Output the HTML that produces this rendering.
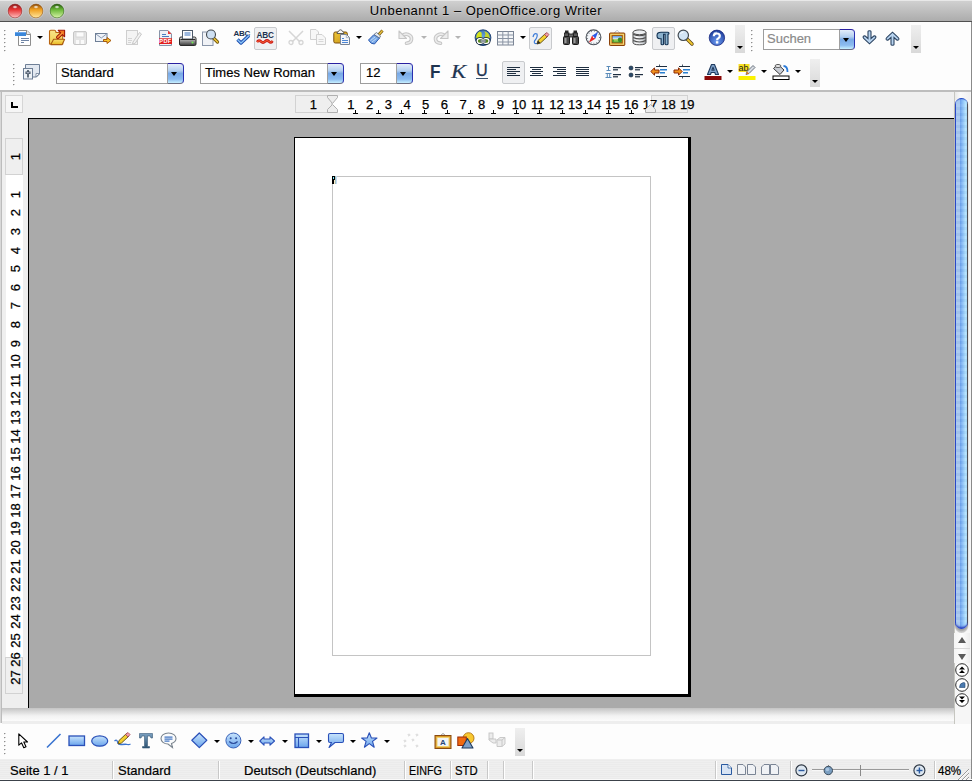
<!DOCTYPE html>
<html><head><meta charset="utf-8"><style>
*{margin:0;padding:0;box-sizing:border-box}
html,body{width:972px;height:781px;overflow:hidden;background:#fdfdfd;font-family:"Liberation Sans",sans-serif;position:relative}
.a{position:absolute}
#title{left:0;top:0;width:972px;height:22px;background:linear-gradient(#e8e8e8 0,#e8e8e8 1px,#d0d0d0 1px,#acacac 100%);border-bottom:1px solid #505050}
#title .t{left:0;width:972px;top:3px;text-align:center;font-size:13px;letter-spacing:0.5px;color:#000;text-shadow:0 1px 0 rgba(255,255,255,.25)}
.tl{width:14px;height:14px;border-radius:50%;top:4px}
.grip{width:2px;background:repeating-linear-gradient(#a8a8a8 0 1px,transparent 1px 4px)}
.btnbox{border:1px solid #c9c9c9;background:#eeeeee;border-radius:2px}
.chev{background:linear-gradient(#f4f4f4,#d8d8d8);}
.chev:after{content:"";position:absolute;left:2px;bottom:5px;border-left:3px solid transparent;border-right:3px solid transparent;border-top:3px solid #000}
.dd{position:absolute;width:0;height:0;border-left:3px solid transparent;border-right:3px solid transparent;border-top:3px solid #000}
.ddg{position:absolute;width:0;height:0;border-left:3px solid transparent;border-right:3px solid transparent;border-top:3px solid #b8b8b8}
.combo{position:absolute;background:#fff;border:1px solid #9a9a9a;font-size:13px;color:#000;padding-left:4px;line-height:19px}
.cbtn{position:absolute;background:linear-gradient(#cfe0f5,#8fb6e8 50%,#6d9fe0 51%,#a9cdf5);border:1px solid #3e5ea8;border-radius:0 4px 4px 0}
.cbtn:after{content:"";position:absolute;left:4px;top:8px;border-left:4px solid transparent;border-right:4px solid transparent;border-top:5px solid #000}
.rn{position:absolute;font-size:13px;color:#000;-webkit-text-stroke:0.25px #000;width:30px;text-align:center;line-height:13px}
.vr{position:absolute;font-size:13px;color:#000;-webkit-text-stroke:0.25px #000;width:30px;text-align:center;line-height:13px;transform:rotate(-90deg)}
.tick{position:absolute;width:5px;height:4px}
.tick:before{content:"";position:absolute;left:2px;top:0;width:1px;height:3px;background:#000}
.tick:after{content:"";position:absolute;left:0;top:3px;width:5px;height:1px;background:#000}
.st{position:absolute;top:763px;font-size:13px;color:#000;-webkit-text-stroke:0.2px #000;line-height:15px;white-space:nowrap}
.sd{position:absolute;top:761px;width:1px;height:18px;background:#c8c8c8;box-shadow:1px 0 0 #fff}
svg{position:absolute;overflow:visible}
</style></head><body>
<div id="title" class="a">
<div class="a t">Unbenannt 1 – OpenOffice.org Writer</div>
<svg style="left:7px;top:3px" width="16" height="16" viewBox="0 0 16 16"><defs>
<linearGradient id="rl" x1="0" y1="0" x2="0" y2="1"><stop offset="0" stop-color="#8a1c1c"/><stop offset="0.4" stop-color="#e83434"/><stop offset="1" stop-color="#ffc0c0"/></linearGradient>
<radialGradient id="rlh" cx="0.5" cy="0.5" r="0.5"><stop offset="0" stop-color="#fff" stop-opacity="1"/><stop offset="1" stop-color="#fff" stop-opacity="0"/></radialGradient></defs>
<circle cx="8" cy="8" r="7.6" fill="none" stroke="#dfe2e2" stroke-width="0.8" opacity="0.7"/>
<circle cx="8" cy="8" r="6.9" fill="url(#rl)" stroke="#8a1c1c" stroke-width="0.7" stroke-opacity="0.8"/>
<ellipse cx="8" cy="4" rx="2.8" ry="1.8" fill="url(#rlh)"/></svg>
<svg style="left:28px;top:3px" width="16" height="16" viewBox="0 0 16 16"><defs>
<linearGradient id="ol" x1="0" y1="0" x2="0" y2="1"><stop offset="0" stop-color="#8a4a0a"/><stop offset="0.4" stop-color="#f0a020"/><stop offset="1" stop-color="#ffe8a0"/></linearGradient>
<radialGradient id="olh" cx="0.5" cy="0.5" r="0.5"><stop offset="0" stop-color="#fff" stop-opacity="1"/><stop offset="1" stop-color="#fff" stop-opacity="0"/></radialGradient></defs>
<circle cx="8" cy="8" r="7.6" fill="none" stroke="#dfe2e2" stroke-width="0.8" opacity="0.7"/>
<circle cx="8" cy="8" r="6.9" fill="url(#ol)" stroke="#8a4a0a" stroke-width="0.7" stroke-opacity="0.8"/>
<ellipse cx="8" cy="4" rx="2.8" ry="1.8" fill="url(#olh)"/></svg>
<svg style="left:49px;top:3px" width="16" height="16" viewBox="0 0 16 16"><defs>
<linearGradient id="gl2" x1="0" y1="0" x2="0" y2="1"><stop offset="0" stop-color="#2a5a10"/><stop offset="0.4" stop-color="#6ab838"/><stop offset="1" stop-color="#d8f4a8"/></linearGradient>
<radialGradient id="gl2h" cx="0.5" cy="0.5" r="0.5"><stop offset="0" stop-color="#fff" stop-opacity="1"/><stop offset="1" stop-color="#fff" stop-opacity="0"/></radialGradient></defs>
<circle cx="8" cy="8" r="7.6" fill="none" stroke="#dfe2e2" stroke-width="0.8" opacity="0.7"/>
<circle cx="8" cy="8" r="6.9" fill="url(#gl2)" stroke="#2a5a10" stroke-width="0.7" stroke-opacity="0.8"/>
<ellipse cx="8" cy="4" rx="2.8" ry="1.8" fill="url(#gl2h)"/></svg>
</div>
<div class="a" style="left:0;top:22px;width:972px;height:68px;background:#fdfdfd"></div>
<div class="a" style="left:0;top:90px;width:972px;height:2px;background:#bdbdbd"></div>
<div class="a" style="left:0;top:92px;width:954px;height:616px;background:#efefef"></div>
<div class="a" style="left:0;top:92px;width:2px;height:631px;background:linear-gradient(90deg,#d8d8d8 0 1px,#bcbcbc 1px 2px)"></div>
<div class="a" style="left:5px;top:95px;width:18px;height:18px;background:#f6f6f6;border:1px solid #d6d6d6"></div>
<div class="a" style="left:11px;top:102px;width:2px;height:6px;background:#000"></div>
<div class="a" style="left:11px;top:106px;width:7px;height:2px;background:#000"></div>
<div class="a" style="left:295px;top:96px;width:393px;height:17px;background:#fff"></div>
<div class="a" style="left:295px;top:95px;width:37px;height:18px;background:#efefef;border:1px solid #d2d2d2"></div>
<div class="a" style="left:651px;top:95px;width:37px;height:18px;background:#efefef;border:1px solid #d2d2d2"></div>
<div class="rn" style="left:335.9px;top:98px">1</div>
<div class="rn" style="left:354.6px;top:98px">2</div>
<div class="rn" style="left:373.3px;top:98px">3</div>
<div class="rn" style="left:392.0px;top:98px">4</div>
<div class="rn" style="left:410.6px;top:98px">5</div>
<div class="rn" style="left:429.3px;top:98px">6</div>
<div class="rn" style="left:448.0px;top:98px">7</div>
<div class="rn" style="left:466.7px;top:98px">8</div>
<div class="rn" style="left:485.4px;top:98px">9</div>
<div class="rn" style="left:504.1px;top:98px">10</div>
<div class="rn" style="left:522.8px;top:98px">11</div>
<div class="rn" style="left:541.5px;top:98px">12</div>
<div class="rn" style="left:560.2px;top:98px">13</div>
<div class="rn" style="left:578.9px;top:98px">14</div>
<div class="rn" style="left:597.5px;top:98px">15</div>
<div class="rn" style="left:616.2px;top:98px">16</div>
<div class="rn" style="left:634.9px;top:98px">17</div>
<div class="rn" style="left:653.6px;top:98px">18</div>
<div class="rn" style="left:672.3px;top:98px">19</div>
<div class="rn" style="left:298.3px;top:98px">1</div>
<div class="tick" style="left:353.1px;top:110px"></div>
<div class="tick" style="left:376.1px;top:110px"></div>
<div class="tick" style="left:399.1px;top:110px"></div>
<div class="tick" style="left:422.1px;top:110px"></div>
<div class="tick" style="left:445.1px;top:110px"></div>
<div class="tick" style="left:468.1px;top:110px"></div>
<div class="tick" style="left:491.1px;top:110px"></div>
<div class="tick" style="left:514.1px;top:110px"></div>
<div class="tick" style="left:537.1px;top:110px"></div>
<div class="tick" style="left:560.1px;top:110px"></div>
<div class="tick" style="left:583.1px;top:110px"></div>
<div class="tick" style="left:606.1px;top:110px"></div>
<div class="tick" style="left:629.1px;top:110px"></div>
<svg style="left:327px;top:95px" width="11" height="18"><path d="M0.5 0.5H10.5V2.5L5.5 8.5L0.5 2.5Z M0.5 17.5H10.5V14.5L5.5 9.5L0.5 14.5Z" fill="#ededed" stroke="#b0b0b0"/></svg>
<svg style="left:645px;top:95px" width="11" height="18"><path d="M0.5 17.5H10.5V14.5L5.5 9.5L0.5 14.5Z" fill="#ededed" stroke="#b0b0b0"/></svg>
<div class="a" style="left:6px;top:138px;width:17px;height:556px;background:#fff"></div>
<div class="a" style="left:5px;top:138px;width:18px;height:37px;background:#efefef;border:1px solid #d2d2d2"></div>
<div class="a" style="left:5px;top:657px;width:18px;height:37px;background:#efefef;border:1px solid #d2d2d2"></div>
<div class="vr" style="left:-0.5px;top:187.8px">1</div>
<div class="vr" style="left:-0.5px;top:206.4px">2</div>
<div class="vr" style="left:-0.5px;top:225.0px">3</div>
<div class="vr" style="left:-0.5px;top:243.6px">4</div>
<div class="vr" style="left:-0.5px;top:262.2px">5</div>
<div class="vr" style="left:-0.5px;top:280.8px">6</div>
<div class="vr" style="left:-0.5px;top:299.3px">7</div>
<div class="vr" style="left:-0.5px;top:317.9px">8</div>
<div class="vr" style="left:-0.5px;top:336.5px">9</div>
<div class="vr" style="left:-0.5px;top:355.1px">10</div>
<div class="vr" style="left:-0.5px;top:373.7px">11</div>
<div class="vr" style="left:-0.5px;top:392.3px">12</div>
<div class="vr" style="left:-0.5px;top:410.9px">13</div>
<div class="vr" style="left:-0.5px;top:429.5px">14</div>
<div class="vr" style="left:-0.5px;top:448.1px">15</div>
<div class="vr" style="left:-0.5px;top:466.7px">16</div>
<div class="vr" style="left:-0.5px;top:485.2px">17</div>
<div class="vr" style="left:-0.5px;top:503.8px">18</div>
<div class="vr" style="left:-0.5px;top:522.4px">19</div>
<div class="vr" style="left:-0.5px;top:541.0px">20</div>
<div class="vr" style="left:-0.5px;top:559.6px">21</div>
<div class="vr" style="left:-0.5px;top:578.2px">22</div>
<div class="vr" style="left:-0.5px;top:596.8px">23</div>
<div class="vr" style="left:-0.5px;top:615.4px">24</div>
<div class="vr" style="left:-0.5px;top:634.0px">25</div>
<div class="vr" style="left:-0.5px;top:652.5px">26</div>
<div class="vr" style="left:-0.5px;top:671.1px">27</div>
<div class="vr" style="left:-0.5px;top:149.5px">1</div>
<div class="a" style="left:28px;top:118px;width:926px;height:590px;background:#aaaaaa;border-left:1px solid #000;border-top:1px solid #000"></div>
<div class="a" style="left:294px;top:137px;width:397px;height:560px;background:#fff;border-left:1px solid #000;border-top:1px solid #000;border-right:3px solid #000;border-bottom:3px solid #000"></div>
<div class="a" style="left:332px;top:176px;width:319px;height:480px;border:1px solid #c4c4c4"></div>
<div class="a" style="left:332px;top:176px;width:5px;height:8px;background:linear-gradient(90deg,#000 0 3px,#a8c4c0 3px 4px,#c4dcf4 4px)"></div>
<div class="a" style="left:333px;top:177px;width:1px;height:2px;background:#7ae8f8"></div>
<div class="a" style="left:334px;top:180px;width:1px;height:4px;background:#fcecc8"></div>
<div class="a" style="left:2px;top:708px;width:952px;height:13px;background:linear-gradient(#c4c4c4,#f2f2f2 60%,#fbfbfb)"></div>
<div class="a" style="left:2px;top:721px;width:970px;height:3px;background:#eeeeee"></div>
<div class="a" style="left:954px;top:92px;width:17px;height:632px;background:#f6f6f6"></div>
<div class="a" style="left:971px;top:22px;width:1px;height:759px;background:#8a8a8a"></div>
<div class="a" style="left:0;top:724px;width:971px;height:35px;background:#fdfdfd"></div>
<div class="a" style="left:0;top:759px;width:971px;height:21px;background:repeating-linear-gradient(#efefef 0 1px,#ebebeb 1px 2px)"></div>
<div class="a" style="left:0;top:779px;width:972px;height:1px;background:#fafafa"></div>
<div class="a" style="left:0;top:780px;width:972px;height:1px;background:#3c424a"></div>
<div class="sd" style="left:112px"></div>
<div class="sd" style="left:218px"></div>
<div class="sd" style="left:404px"></div>
<div class="sd" style="left:450px"></div>
<div class="sd" style="left:487px"></div>
<div class="sd" style="left:503px"></div>
<div class="sd" style="left:532px"></div>
<div class="sd" style="left:715px"></div>
<div class="sd" style="left:790px"></div>
<div class="sd" style="left:934px"></div>
<div class="st" style="left:10px">Seite 1 / 1</div>
<div class="st" style="left:118px">Standard</div>
<div class="st" style="left:244px">Deutsch (Deutschland)</div>
<div class="st" style="left:409px;transform:scaleX(0.83);transform-origin:0 0">EINFG</div>
<div class="st" style="left:455px;transform:scaleX(0.87);transform-origin:0 0">STD</div>
<div class="st" style="left:938px;transform:scaleX(0.89);transform-origin:0 0">48%</div>
<div class="a" style="left:4px;top:30px;width:1px;height:1px;background:#8e8e8e;box-shadow:1px 0 0 #d0d0d0,0 1px 0 #e8e8e8"></div><div class="a" style="left:4px;top:34px;width:1px;height:1px;background:#8e8e8e;box-shadow:1px 0 0 #d0d0d0,0 1px 0 #e8e8e8"></div><div class="a" style="left:4px;top:38px;width:1px;height:1px;background:#8e8e8e;box-shadow:1px 0 0 #d0d0d0,0 1px 0 #e8e8e8"></div><div class="a" style="left:4px;top:42px;width:1px;height:1px;background:#8e8e8e;box-shadow:1px 0 0 #d0d0d0,0 1px 0 #e8e8e8"></div><div class="a" style="left:4px;top:46px;width:1px;height:1px;background:#8e8e8e;box-shadow:1px 0 0 #d0d0d0,0 1px 0 #e8e8e8"></div><div class="a" style="left:4px;top:50px;width:1px;height:1px;background:#8e8e8e;box-shadow:1px 0 0 #d0d0d0,0 1px 0 #e8e8e8"></div>
<svg style="left:14px;top:30px" width="18" height="16" viewBox="0 0 18 16">
<path d="M4.5 0.5H13L16.5 4V15.5H4.5Z" fill="#fff" stroke="#8e8e8e"/>
<path d="M12.5 0.5V4.5H16.5" fill="#ececec" stroke="#8e8e8e"/>
<rect x="1" y="2" width="11" height="4" fill="#3b87d9"/><rect x="1" y="2" width="11" height="1" fill="#6aa8ee"/>
<rect x="7" y="8" width="8" height="1" fill="#6f84a4"/><rect x="7" y="10" width="8" height="1" fill="#6f84a4"/><rect x="7" y="12" width="3" height="1" fill="#6f84a4"/></svg>
<div class="a" style="left:37px;top:36px;width:0;height:0;border-left:3px solid transparent;border-right:3px solid transparent;border-top:3px solid #000"></div>
<svg style="left:48px;top:29px" width="18" height="17" viewBox="0 0 18 17">
<defs><linearGradient id="fo" x1="0" y1="0" x2="0" y2="1"><stop offset="0" stop-color="#f8e488"/><stop offset="1" stop-color="#f0d050"/></linearGradient>
<linearGradient id="ff" x1="0" y1="0" x2="0" y2="1"><stop offset="0" stop-color="#fae070"/><stop offset="1" stop-color="#e8b820"/></linearGradient></defs>
<path d="M1.5 15V2.5Q1.5 1.3 2.7 1.3H6.5Q7.5 1.3 7.8 2.5L8 3.5H13.5Q14.7 3.5 14.7 4.7V15Z" fill="url(#fo)" stroke="#b86410" stroke-width="1.1"/>
<path d="M2.8 15.6L5.6 10.3H16.6L14.2 15.6Z" fill="url(#ff)" stroke="#a85a10" stroke-width="1.1" stroke-linejoin="round"/>
<path d="M9.8 8.3L14 4.2" stroke="#a01808" stroke-width="3.6" stroke-linecap="round"/>
<path d="M10.2 1.3H16.6V7.8Z" fill="#f07820" stroke="#a01808" stroke-width="1.1" stroke-linejoin="round"/>
<path d="M9.8 8.3L14 4.2" stroke="#f89838" stroke-width="1.6" stroke-linecap="round"/></svg>
<svg style="left:73px;top:31px" width="14" height="14" viewBox="0 0 14 14">
<rect x="0.5" y="0.5" width="13" height="13" rx="1.5" fill="#e4e4e4" stroke="#c6c6c6"/>
<rect x="3" y="1" width="8" height="5" fill="#fbfbfb" stroke="#d2d2d2" stroke-width="0.8"/>
<rect x="3" y="9" width="3" height="4" fill="#fafafa"/><rect x="8" y="9" width="3" height="4" fill="#fafafa"/></svg>
<svg style="left:95px;top:33px" width="17" height="12" viewBox="0 0 17 12">
<rect x="0.5" y="0.5" width="11.5" height="8" fill="#eef2f8" stroke="#6e7f96"/>
<path d="M1 1L6.3 5L11.5 1" fill="none" stroke="#8898b0"/>
<path d="M8.5 6.5H12V4.5L16 7.5L12 10.5V8.5H8.5Z" fill="#f8c42c" stroke="#a6580e"/></svg>
<svg style="left:126px;top:30px" width="16" height="15" viewBox="0 0 16 15">
<rect x="0.5" y="0.5" width="11" height="14" fill="#f4f4f4" stroke="#cfcfcf"/>
<rect x="2" y="8" width="4" height="1" fill="#d4d4d4"/><rect x="2" y="10" width="4" height="1" fill="#d4d4d4"/><rect x="2" y="12" width="3" height="1" fill="#d4d4d4"/>
<path d="M7 12L13.5 2.5L15.5 4L9 13.5L6.5 14Z" fill="#f2f2f2" stroke="#c8c8c8"/></svg>
<svg style="left:158px;top:30px" width="15" height="16" viewBox="0 0 15 16">
<path d="M1.5 0.5H10L13.5 4V15.5H1.5Z" fill="#eef1f6" stroke="#8894a8"/>
<path d="M10 0.5L13.5 4H10Z" fill="#e83838"/>
<rect x="4" y="4" width="4" height="1" fill="#4a7ec0"/><rect x="4" y="6" width="7" height="1" fill="#4a7ec0"/>
<rect x="1" y="8.3" width="13" height="5.7" fill="#e21e1e"/>
<text x="7.5" y="13.3" font-family="Liberation Sans" font-weight="bold" font-size="5.6" fill="#fff" text-anchor="middle" letter-spacing="0.4">PDF</text></svg>
<svg style="left:179px;top:30px" width="18" height="16" viewBox="0 0 18 16">
<defs><linearGradient id="pg" x1="0" y1="0" x2="0" y2="1"><stop offset="0" stop-color="#e0e0e0"/><stop offset="0.45" stop-color="#9a9a9a"/><stop offset="1" stop-color="#3a3a3a"/></linearGradient></defs>
<rect x="0.5" y="7" width="16.5" height="8.5" rx="1.5" fill="url(#pg)" stroke="#2a2a2a"/>
<rect x="3.5" y="0.5" width="10" height="8.5" fill="#fdfdfd" stroke="#4e5a6a"/>
<rect x="5.5" y="2.5" width="6" height="1" fill="#3a72c0"/><rect x="5.5" y="4.5" width="6" height="1" fill="#3a72c0"/>
<rect x="1.5" y="9" width="14.5" height="1" fill="#2a2a2a"/>
<circle cx="13.5" cy="12.5" r="1" fill="#70f050"/></svg>
<svg style="left:202px;top:29px" width="17" height="17" viewBox="0 0 17 17">
<rect x="0.5" y="3" width="10.5" height="13.5" fill="#f0f2f6" stroke="#8894a8"/>
<path d="M11 8.5L15.5 13" stroke="#6e5410" stroke-width="3.2" stroke-linecap="round"/>
<path d="M11 8.5L15.5 13" stroke="#f0c83a" stroke-width="1.6" stroke-linecap="round"/>
<circle cx="9" cy="5.5" r="4.5" fill="#cfe0f2" stroke="#40484f" stroke-width="1.1"/></svg>
<svg style="left:233px;top:29px" width="18" height="17" viewBox="0 0 18 17">
<text x="0.5" y="6.8" font-family="Liberation Sans" font-weight="bold" font-size="8" fill="#1c3250" letter-spacing="-0.3">ABC</text>
<path d="M4.5 10.5L8 14L16 6.5" fill="none" stroke="#1d4fb0" stroke-width="3.4" stroke-linejoin="round"/>
<path d="M4.5 10.5L8 14L16 6.5" fill="none" stroke="#8cc4f8" stroke-width="1.4" stroke-linejoin="round"/></svg>
<div class="a" style="left:254px;top:27px;width:23px;height:23px;background:#eff0f2;border:1px solid #c8cacd;border-radius:2px"></div>
<svg style="left:256px;top:31px" width="18" height="15" viewBox="0 0 18 15">
<text x="0.5" y="6.8" font-family="Liberation Sans" font-weight="bold" font-size="8.2" fill="#1c3250" letter-spacing="-0.2">ABC</text>
<path d="M1 11Q3 8.5 5 10.5T9 10.5T13 10.5T16.5 10" fill="none" stroke="#c81818" stroke-width="2.6"/>
<path d="M1 11Q3 8.5 5 10.5T9 10.5T13 10.5T16.5 10" fill="none" stroke="#f86030" stroke-width="1"/></svg>
<svg style="left:288px;top:30px" width="16" height="15" viewBox="0 0 16 15">
<path d="M1 1L12 12M15 1L4 12" stroke="#d6d6d6" stroke-width="1.5"/>
<circle cx="3" cy="12.5" r="2" fill="none" stroke="#d6d6d6" stroke-width="1.3"/><circle cx="13" cy="12.5" r="2" fill="none" stroke="#d6d6d6" stroke-width="1.3"/></svg>
<svg style="left:310px;top:29px" width="16" height="16" viewBox="0 0 16 16">
<path d="M0.5 0.5H6L8.5 3V10.5H0.5Z" fill="#f7f7f7" stroke="#d0d0d0"/>
<path d="M6.5 5.5H12L15.5 9V15.5H6.5Z" fill="#f7f7f7" stroke="#d0d0d0"/>
<rect x="8.5" y="10" width="5" height="1" fill="#d8d8d8"/><rect x="8.5" y="12" width="5" height="1" fill="#d8d8d8"/></svg>
<svg style="left:333px;top:29px" width="18" height="17" viewBox="0 0 18 17">
<defs><linearGradient id="cb" x1="0" y1="0" x2="1" y2="1"><stop offset="0" stop-color="#f0c838"/><stop offset="1" stop-color="#c89418"/></linearGradient></defs>
<rect x="0.8" y="3" width="13.5" height="11" rx="1.5" fill="url(#cb)" stroke="#7a4e10" stroke-width="1"/>
<path d="M4 4.5Q4 2.8 5.5 2.5Q6 0.8 7.5 0.8Q9 0.8 9.5 2.5Q11 2.8 11 4.5Z" fill="#f8f8f8" stroke="#505050" stroke-width="0.9"/>
<path d="M7.5 5.5H13.5L16.5 8.5V15.5H7.5Z" fill="#f4f6fa" stroke="#7a8494" stroke-width="1"/>
<path d="M13.3 5.5V8.7H16.5" fill="none" stroke="#9aa4b4" stroke-width="0.8"/>
<rect x="9" y="9" width="2" height="0.9" fill="#3a7ad0"/><rect x="9" y="11" width="6" height="0.9" fill="#3a7ad0"/><rect x="9" y="13" width="6" height="0.9" fill="#3a7ad0"/></svg>
<div class="a" style="left:356px;top:36px;width:0;height:0;border-left:3px solid transparent;border-right:3px solid transparent;border-top:3px solid #000"></div>
<svg style="left:367px;top:29px" width="18" height="17" viewBox="0 0 18 17">
<path d="M11.5 6L15.5 1.5" stroke="#7a5a10" stroke-width="3"/><path d="M11.5 6L15.5 1.5" stroke="#e6c040" stroke-width="1.4"/>
<path d="M1.5 11L7 5.5L12.5 9L7.5 15Q4 15.5 1.5 11Z" fill="#78a8e6" stroke="#2a58b0"/>
<path d="M3.5 11.5L8 8M5 13L9.5 9.5" stroke="#c8e0fa" stroke-width="0.9"/>
<path d="M7 5.5L9.5 3.5L13.5 7L12.5 9Z" fill="#e8ecf0" stroke="#5a6a80" stroke-width="0.8"/></svg>
<svg style="left:398px;top:30px" width="17" height="16" viewBox="0 0 17 16"><path d="M4.5 5.5Q7 3.5 10 4.5Q14 6 13.5 9.5Q13 13 8.5 13.3" fill="none" stroke="#c6c6c6" stroke-width="3.6" stroke-linecap="round"/>
<path d="M4.5 5.5Q7 3.5 10 4.5Q14 6 13.5 9.5Q13 13 8.5 13.3" fill="none" stroke="#ececec" stroke-width="1.6" stroke-linecap="round"/>
<path d="M1 1V8.5H8.5Z" fill="#ececec" stroke="#c6c6c6" stroke-width="1.1" stroke-linejoin="round"/></svg>
<div class="a" style="left:421px;top:36px;width:0;height:0;border-left:3px solid transparent;border-right:3px solid transparent;border-top:3px solid #b4b4b4"></div>
<svg style="left:432px;top:30px" width="17" height="16" viewBox="0 0 17 16"><g transform="translate(17,0) scale(-1,1)"><path d="M4.5 5.5Q7 3.5 10 4.5Q14 6 13.5 9.5Q13 13 8.5 13.3" fill="none" stroke="#c6c6c6" stroke-width="3.6" stroke-linecap="round"/>
<path d="M4.5 5.5Q7 3.5 10 4.5Q14 6 13.5 9.5Q13 13 8.5 13.3" fill="none" stroke="#ececec" stroke-width="1.6" stroke-linecap="round"/>
<path d="M1 1V8.5H8.5Z" fill="#ececec" stroke="#c6c6c6" stroke-width="1.1" stroke-linejoin="round"/></g></svg>
<div class="a" style="left:455px;top:36px;width:0;height:0;border-left:3px solid transparent;border-right:3px solid transparent;border-top:3px solid #b4b4b4"></div>
<svg style="left:474px;top:29px" width="18" height="17" viewBox="0 0 18 17">
<defs><radialGradient id="gl" cx="0.5" cy="0.45" r="0.6"><stop offset="0" stop-color="#6aa6e0"/><stop offset="0.8" stop-color="#3a70b0"/><stop offset="1" stop-color="#1e4a88"/></radialGradient></defs>
<circle cx="9" cy="8.7" r="7.9" fill="url(#gl)" stroke="#1e3e6e" stroke-width="0.9"/>
<path d="M2.3 9Q2 4.5 5.5 2.5Q8 2.8 7.8 5Q7.2 7.5 8.3 9Z" fill="#d4e41c"/>
<path d="M10.3 2.3Q15 3 15.9 9H11.2Q10.2 6.5 11.5 5Z" fill="#c4d42c"/>
<g fill="none" stroke="#0e1e2e" stroke-width="2.8"><rect x="3.2" y="9.6" width="5.8" height="4.8" rx="2.4"/><rect x="9.2" y="9.6" width="5.8" height="4.8" rx="2.4"/></g>
<g fill="#5a8a20" stroke="#fff" stroke-width="1.3"><rect x="3.2" y="9.6" width="5.8" height="4.8" rx="2.4"/><rect x="9.2" y="9.6" width="5.8" height="4.8" rx="2.4"/></g>
<path d="M6.5 12H11.7" stroke="#0e1e2e" stroke-width="2.6"/><path d="M6.5 12H11.7" stroke="#fff" stroke-width="1.1"/></svg>
<svg style="left:497px;top:31px" width="18" height="15" viewBox="0 0 18 15">
<rect x="0.5" y="0.5" width="16" height="13.5" fill="#f4f6f8" stroke="#7a8494"/>
<path d="M0.5 4H16.5M0.5 7.5H16.5M0.5 11H16.5M5.8 0.5V14M11.2 0.5V14" stroke="#8a94a4"/>
</svg>
<div class="a" style="left:520px;top:36px;width:0;height:0;border-left:3px solid transparent;border-right:3px solid transparent;border-top:3px solid #000"></div>
<div class="a" style="left:529px;top:27px;width:23px;height:23px;background:#eff0f2;border:1px solid #c8cacd;border-radius:2px"></div>
<svg style="left:532px;top:32px" width="17" height="13" viewBox="0 0 17 13">
<path d="M1 5Q2 0.5 5 2Q6 5 2.5 9Q1.5 12 5 11.5" fill="none" stroke="#3a7ad8" stroke-width="1.2"/>
<path d="M5 12L6 8.5L13.5 1.5L16 4L8.5 11Z" fill="#f4d030" stroke="#5a4a10" stroke-width="0.9"/>
<path d="M12.5 2.5L15 0.5L16.8 2.5L15 5Z" fill="#f0a0a8" stroke="#a04050" stroke-width="0.8"/>
<path d="M5 12L6 8.5L8.5 11Z" fill="#2a2a2a"/></svg>
<svg style="left:563px;top:30px" width="16" height="15" viewBox="0 0 16 15">
<rect x="2" y="0.5" width="3.5" height="3" fill="#2a2a2a"/><rect x="10.5" y="0.5" width="3.5" height="3" fill="#2a2a2a"/>
<rect x="1.5" y="3" width="4.5" height="4" fill="#5a5a5a" stroke="#1a1a1a" stroke-width="0.8"/><rect x="10" y="3" width="4.5" height="4" fill="#5a5a5a" stroke="#1a1a1a" stroke-width="0.8"/>
<rect x="5.5" y="4" width="5" height="3" fill="#6a6a6a" stroke="#1a1a1a" stroke-width="0.8"/>
<rect x="0.5" y="6.5" width="6" height="8" rx="1" fill="#4a4a4a" stroke="#1a1a1a"/><rect x="9.5" y="6.5" width="6" height="8" rx="1" fill="#4a4a4a" stroke="#1a1a1a"/>
<rect x="1.5" y="8" width="2" height="5" fill="#9a9a9a"/><rect x="10.5" y="8" width="2" height="5" fill="#9a9a9a"/></svg>
<svg style="left:585px;top:29px" width="17" height="17" viewBox="0 0 17 17">
<circle cx="8.5" cy="8.3" r="7.4" fill="#f4f7fa" stroke="#4a5058" stroke-width="1.1"/>
<circle cx="8.5" cy="8.3" r="6.2" fill="none" stroke="#6a7078" stroke-width="1.3" stroke-dasharray="0.7 2.2"/>
<path d="M13.2 2.8L10.3 9.8L7 6.8Z" fill="#2a5ae8"/><path d="M3.8 13.8L7 6.8L10.3 9.8Z" fill="#e82828"/>
<circle cx="8.6" cy="8.3" r="0.7" fill="#fff"/></svg>
<svg style="left:608px;top:29px" width="18" height="17" viewBox="0 0 18 17">
<path d="M6.3 4L9 1.3L11.8 4" fill="none" stroke="#7a8898" stroke-width="0.9" stroke-dasharray="1 0.6"/>
<rect x="1.5" y="4" width="15.3" height="12.5" rx="0.8" fill="#c87818" stroke="#8a4008" stroke-width="1"/>
<rect x="2.8" y="5.3" width="12.7" height="9.9" fill="none" stroke="#f4dc78" stroke-width="1.1"/>
<rect x="4" y="6.4" width="10.3" height="7.7" fill="#8a4a10"/>
<defs><linearGradient id="sk" x1="0" y1="0" x2="0" y2="1"><stop offset="0" stop-color="#5a9ae8"/><stop offset="0.45" stop-color="#d8e8f8"/><stop offset="0.55" stop-color="#a8d860"/><stop offset="1" stop-color="#58b038"/></linearGradient></defs>
<rect x="4.6" y="7" width="9.1" height="6.5" fill="url(#sk)"/>
<ellipse cx="12" cy="10.8" rx="2.2" ry="2.4" fill="#3a8a28"/><ellipse cx="5" cy="11.8" rx="1" ry="1.3" fill="#4a9a30"/></svg>
<svg style="left:632px;top:29px" width="15" height="17" viewBox="0 0 15 17">
<defs><linearGradient id="db" x1="0" y1="0" x2="1" y2="0"><stop offset="0" stop-color="#c8ccd0"/><stop offset="0.3" stop-color="#fafafa"/><stop offset="0.7" stop-color="#d8dce0"/><stop offset="1" stop-color="#909498"/></linearGradient></defs>
<path d="M1 3.5V13.5Q1 15.8 7.5 15.8Q14 15.8 14 13.5V3.5Z" fill="url(#db)" stroke="#4a4a4a" stroke-width="1"/>
<ellipse cx="7.5" cy="3.3" rx="6.5" ry="2.4" fill="#eceef0" stroke="#4a4a4a" stroke-width="1"/>
<path d="M1.2 5.3Q7.5 8.3 13.8 5.3M1.2 8.4Q7.5 11.4 13.8 8.4M1.2 11.5Q7.5 14.5 13.8 11.5" fill="none" stroke="#505050" stroke-width="1.1"/></svg>
<div class="a" style="left:652px;top:27px;width:23px;height:23px;background:#eff0f2;border:1px solid #c8cacd;border-radius:2px"></div>
<svg style="left:656px;top:31px" width="15" height="15" viewBox="0 0 15 15">
<path d="M5 1.2H12Q13 1.2 13 2.2Q13 3.2 12 3.2V13Q12 13.8 10.5 13.8Q9.1 13.8 9.1 13V3.2H7.6V13Q7.6 13.8 6.3 13.8Q5.1 13.8 5.1 13V7.8H4Q1 7.8 1 4.5Q1 1.2 5 1.2Z" fill="#8ab0cc" stroke="#0e2e50" stroke-width="1.1"/></svg>
<svg style="left:677px;top:29px" width="17" height="17" viewBox="0 0 17 17">
<path d="M9.5 9.5L15 15" stroke="#5a4010" stroke-width="3.4" stroke-linecap="round"/>
<path d="M9.5 9.5L15 15" stroke="#f0c830" stroke-width="1.8" stroke-linecap="round"/>
<circle cx="6.3" cy="6.3" r="5.2" fill="#d2e4f4" stroke="#40484f" stroke-width="1.2"/>
<path d="M3.5 5Q4.5 3 6.5 3" fill="none" stroke="#fff" stroke-width="1"/></svg>
<svg style="left:708px;top:29px" width="18" height="17" viewBox="0 0 18 17">
<defs><radialGradient id="hp" cx="0.5" cy="0.75" r="0.75"><stop offset="0" stop-color="#6a9af0"/><stop offset="1" stop-color="#1a3a98"/></radialGradient></defs>
<circle cx="8.9" cy="8.8" r="7.7" fill="url(#hp)" stroke="#1a2a80" stroke-width="0.8"/>
<path d="M5.5 4.2Q7 3.2 9 3.2" stroke="#c8d8f8" stroke-width="0.8" fill="none"/>
<path d="M5.8 7.2Q5.8 4.5 8.9 4.5Q11.8 4.5 11.8 7Q11.8 8.5 10.1 9.4Q9.1 9.9 9.1 11.2" fill="none" stroke="#fff" stroke-width="2.2"/>
<rect x="7.9" y="12.2" width="2.4" height="2.3" fill="#fff"/></svg>
<div class="a" style="left:735px;top:25px;width:10px;height:28px;background:linear-gradient(#efefef,#d9d9d9)"><div class="a" style="left:2px;top:21px;width:0;height:0;border-left:3px solid transparent;border-right:3px solid transparent;border-top:3px solid #000"></div></div>
<div class="a" style="left:751px;top:30px;width:1px;height:1px;background:#8e8e8e;box-shadow:1px 0 0 #d0d0d0,0 1px 0 #e8e8e8"></div><div class="a" style="left:751px;top:34px;width:1px;height:1px;background:#8e8e8e;box-shadow:1px 0 0 #d0d0d0,0 1px 0 #e8e8e8"></div><div class="a" style="left:751px;top:38px;width:1px;height:1px;background:#8e8e8e;box-shadow:1px 0 0 #d0d0d0,0 1px 0 #e8e8e8"></div><div class="a" style="left:751px;top:42px;width:1px;height:1px;background:#8e8e8e;box-shadow:1px 0 0 #d0d0d0,0 1px 0 #e8e8e8"></div><div class="a" style="left:751px;top:46px;width:1px;height:1px;background:#8e8e8e;box-shadow:1px 0 0 #d0d0d0,0 1px 0 #e8e8e8"></div><div class="a" style="left:751px;top:50px;width:1px;height:1px;background:#8e8e8e;box-shadow:1px 0 0 #d0d0d0,0 1px 0 #e8e8e8"></div>
<div class="a" style="left:763px;top:29px;width:77px;height:21px;background:#fff;border:1px solid #9d9d9d"></div><div class="a" style="left:767px;top:31px;font-size:13px;line-height:15px;color:#8a8a8a;-webkit-text-stroke:0.2px #8a8a8a;white-space:nowrap">Suchen</div><div class="a" style="left:839px;top:29px;width:16px;height:21px;border-radius:0 4px 4px 0;background:linear-gradient(#e4eefa 0,#b4d0f0 35%,#7aaae6 50%,#8cbcf0 80%,#c8f0ff 100%);border-top:1px solid #2a20a0;border-right:1px solid #2a30b0;border-bottom:1px solid #6a6a80;border-left:1px solid #a0a0a0"></div><div class="a" style="left:843px;top:38px;width:0;height:0;border-left:3px solid transparent;border-right:3px solid transparent;border-top:4px solid #000"></div>
<svg style="left:863px;top:30px" width="14" height="15" viewBox="0 0 14 15">
<path d="M5 1.5Q5 0.8 6.5 0.8Q8 0.8 8 1.5V8.5L10.8 6Q12 5.5 12.8 6.5Q13.2 7.5 12.3 8.3L6.5 13.8L0.7 8.3Q-0.2 7.5 0.2 6.5Q1 5.5 2.2 6L5 8.5Z" fill="#b8d4f0" stroke="#2a4260" stroke-width="1.1"/></svg>
<svg style="left:886px;top:31px" width="14" height="15" viewBox="0 0 14 15">
<path d="M5 13.5Q5 14.2 6.5 14.2Q8 14.2 8 13.5V6.5L10.8 9Q12 9.5 12.8 8.5Q13.2 7.5 12.3 6.7L6.5 1.2L0.7 6.7Q-0.2 7.5 0.2 8.5Q1 9.5 2.2 9L5 6.5Z" fill="#b8d4f0" stroke="#2a4260" stroke-width="1.1"/></svg>
<div class="a" style="left:911px;top:25px;width:10px;height:28px;background:linear-gradient(#efefef,#d9d9d9)"><div class="a" style="left:2px;top:21px;width:0;height:0;border-left:3px solid transparent;border-right:3px solid transparent;border-top:3px solid #000"></div></div>
<div class="a" style="left:13px;top:64px;width:1px;height:1px;background:#8e8e8e;box-shadow:1px 0 0 #d0d0d0,0 1px 0 #e8e8e8"></div><div class="a" style="left:13px;top:68px;width:1px;height:1px;background:#8e8e8e;box-shadow:1px 0 0 #d0d0d0,0 1px 0 #e8e8e8"></div><div class="a" style="left:13px;top:72px;width:1px;height:1px;background:#8e8e8e;box-shadow:1px 0 0 #d0d0d0,0 1px 0 #e8e8e8"></div><div class="a" style="left:13px;top:76px;width:1px;height:1px;background:#8e8e8e;box-shadow:1px 0 0 #d0d0d0,0 1px 0 #e8e8e8"></div><div class="a" style="left:13px;top:80px;width:1px;height:1px;background:#8e8e8e;box-shadow:1px 0 0 #d0d0d0,0 1px 0 #e8e8e8"></div><div class="a" style="left:13px;top:84px;width:1px;height:1px;background:#8e8e8e;box-shadow:1px 0 0 #d0d0d0,0 1px 0 #e8e8e8"></div>
<svg style="left:23px;top:63px" width="18" height="17" viewBox="0 0 18 17">
<path d="M2.5 1.5H16.5V11L13.5 14H2.5Z" fill="#e2e8f0" stroke="#6e7f96"/>
<path d="M13 14V10.5H16.5Z" fill="#fff" stroke="#6e7f96" stroke-width="0.8"/>
<rect x="0.5" y="5.5" width="9" height="10.5" fill="#eef2f6" stroke="#6e7f96"/>
<path d="M5 7V14.5" stroke="#1a2a3a" stroke-width="1.3"/><rect x="2.5" y="8.5" width="5" height="2.5" fill="#3a4a5a"/><rect x="3.5" y="9.3" width="3" height="1" fill="#dde"/></svg>
<div class="a" style="left:56px;top:63px;width:112px;height:21px;background:#fff;border:1px solid #9d9d9d"></div><div class="a" style="left:61px;top:65px;font-size:13px;line-height:15px;color:#000;-webkit-text-stroke:0.2px #000;white-space:nowrap">Standard</div><div class="a" style="left:167px;top:63px;width:17px;height:21px;border-radius:0 4px 4px 0;background:linear-gradient(#e4eefa 0,#b4d0f0 35%,#7aaae6 50%,#8cbcf0 80%,#c8f0ff 100%);border-top:1px solid #2a20a0;border-right:1px solid #2a30b0;border-bottom:1px solid #6a6a80;border-left:1px solid #a0a0a0"></div><div class="a" style="left:171px;top:72px;width:0;height:0;border-left:3px solid transparent;border-right:3px solid transparent;border-top:4px solid #000"></div>
<div class="a" style="left:200px;top:63px;width:128px;height:21px;background:#fff;border:1px solid #9d9d9d"></div><div class="a" style="left:205px;top:65px;font-size:13px;line-height:15px;color:#000;-webkit-text-stroke:0.2px #000;white-space:nowrap">Times New Roman</div><div class="a" style="left:327px;top:63px;width:17px;height:21px;border-radius:0 4px 4px 0;background:linear-gradient(#e4eefa 0,#b4d0f0 35%,#7aaae6 50%,#8cbcf0 80%,#c8f0ff 100%);border-top:1px solid #2a20a0;border-right:1px solid #2a30b0;border-bottom:1px solid #6a6a80;border-left:1px solid #a0a0a0"></div><div class="a" style="left:331px;top:72px;width:0;height:0;border-left:3px solid transparent;border-right:3px solid transparent;border-top:4px solid #000"></div>
<div class="a" style="left:360px;top:63px;width:37px;height:21px;background:#fff;border:1px solid #9d9d9d"></div><div class="a" style="left:366px;top:65px;font-size:13px;line-height:15px;color:#000;-webkit-text-stroke:0.2px #000;white-space:nowrap">12</div><div class="a" style="left:396px;top:63px;width:17px;height:21px;border-radius:0 4px 4px 0;background:linear-gradient(#e4eefa 0,#b4d0f0 35%,#7aaae6 50%,#8cbcf0 80%,#c8f0ff 100%);border-top:1px solid #2a20a0;border-right:1px solid #2a30b0;border-bottom:1px solid #6a6a80;border-left:1px solid #a0a0a0"></div><div class="a" style="left:400px;top:72px;width:0;height:0;border-left:3px solid transparent;border-right:3px solid transparent;border-top:4px solid #000"></div>
<div class="a" style="left:430px;top:62px;font-size:18px;font-weight:bold;color:#1e3450;line-height:20px;transform:scaleX(0.95);transform-origin:0 0">F</div>
<div class="a" style="left:451px;top:62px;font-family:'Liberation Serif';font-size:19px;font-style:italic;font-weight:normal;-webkit-text-stroke:0.2px #1e3450;color:#1e3450;line-height:20px;transform:scaleX(1.2);transform-origin:0 0">K</div>
<div class="a" style="left:476px;top:61px;font-size:17px;color:#1e3450;-webkit-text-stroke:0.3px #1e3450;line-height:20px;transform:scaleX(0.95);transform-origin:0 0">U</div>
<div class="a" style="left:476px;top:78px;width:12px;height:1px;background:#3a5470"></div>
<div class="a" style="left:502px;top:61px;width:23px;height:23px;background:#eff0f2;border:1px solid #c8cacd;border-radius:2px"></div>
<div class="a" style="left:507px;top:67px;width:13px;height:1px;background:#1e2e40"></div><div class="a" style="left:507px;top:69px;width:9px;height:1px;background:#1e2e40"></div><div class="a" style="left:507px;top:71px;width:13px;height:1px;background:#1e2e40"></div><div class="a" style="left:507px;top:73px;width:9px;height:1px;background:#1e2e40"></div><div class="a" style="left:507px;top:75px;width:13px;height:1px;background:#1e2e40"></div>
<div class="a" style="left:530px;top:67px;width:13px;height:1px;background:#1e2e40"></div><div class="a" style="left:532px;top:69px;width:9px;height:1px;background:#1e2e40"></div><div class="a" style="left:530px;top:71px;width:13px;height:1px;background:#1e2e40"></div><div class="a" style="left:532px;top:73px;width:9px;height:1px;background:#1e2e40"></div><div class="a" style="left:530px;top:75px;width:13px;height:1px;background:#1e2e40"></div>
<div class="a" style="left:553px;top:67px;width:13px;height:1px;background:#1e2e40"></div><div class="a" style="left:557px;top:69px;width:9px;height:1px;background:#1e2e40"></div><div class="a" style="left:553px;top:71px;width:13px;height:1px;background:#1e2e40"></div><div class="a" style="left:557px;top:73px;width:9px;height:1px;background:#1e2e40"></div><div class="a" style="left:553px;top:75px;width:13px;height:1px;background:#1e2e40"></div>
<div class="a" style="left:576px;top:67px;width:13px;height:1px;background:#1e2e40"></div><div class="a" style="left:576px;top:69px;width:13px;height:1px;background:#1e2e40"></div><div class="a" style="left:576px;top:71px;width:13px;height:1px;background:#1e2e40"></div><div class="a" style="left:576px;top:73px;width:13px;height:1px;background:#1e2e40"></div><div class="a" style="left:576px;top:75px;width:13px;height:1px;background:#1e2e40"></div>
<svg style="left:605px;top:65px" width="17" height="14" viewBox="0 0 17 14">
<path d="M1.5 1.5H5.5M3.5 1.5V5.5M1.5 5.5H5.5" stroke="#5a8ab8" stroke-width="1"/>
<path d="M0.5 8.5H6.5M2.3 8.5V12.5M4.7 8.5V12.5M0.5 12.5H6.5" stroke="#5a8ab8" stroke-width="1"/>
<rect x="8" y="2" width="8" height="1.2" fill="#1e2e40"/><rect x="8" y="4.2" width="5" height="1.2" fill="#1e2e40"/>
<rect x="8" y="9" width="8" height="1.2" fill="#1e2e40"/><rect x="8" y="11.2" width="5" height="1.2" fill="#1e2e40"/></svg>
<svg style="left:628px;top:65px" width="16" height="14" viewBox="0 0 16 14">
<circle cx="3" cy="3" r="2" fill="#2a4a6a" stroke="#10202e" stroke-width="0.6"/><circle cx="3" cy="10" r="2" fill="#2a4a6a" stroke="#10202e" stroke-width="0.6"/>
<rect x="7" y="2" width="8" height="1.2" fill="#1e2e40"/><rect x="7" y="4.2" width="5" height="1.2" fill="#1e2e40"/>
<rect x="7" y="9" width="8" height="1.2" fill="#1e2e40"/><rect x="7" y="11.2" width="5" height="1.2" fill="#1e2e40"/></svg>
<svg style="left:650px;top:64px" width="18" height="15" viewBox="0 0 18 15"><path d="M6 2.5H17M6 12.5H17" stroke="#1e2e40" stroke-width="1"/>
<path d="M9.5 0.5V2.5M9.5 12.5V14.5" stroke="#1e2e40" stroke-width="0.8"/>
<rect x="10" y="5" width="7" height="1.5" fill="#2a80d0"/><rect x="10" y="8" width="5" height="1.5" fill="#2a80d0"/><path d="M0.8 7.5L4.5 3.8V6H9V9H4.5V11.2Z" fill="#f0901c" stroke="#8a2a08" stroke-width="1"/></svg>
<svg style="left:673px;top:64px" width="18" height="15" viewBox="0 0 18 15"><path d="M6 2.5H17M6 12.5H17" stroke="#1e2e40" stroke-width="1"/>
<path d="M9.5 0.5V2.5M9.5 12.5V14.5" stroke="#1e2e40" stroke-width="0.8"/>
<rect x="10" y="5" width="7" height="1.5" fill="#2a80d0"/><rect x="10" y="8" width="5" height="1.5" fill="#2a80d0"/><path d="M9.2 7.5L5.5 3.8V6H1V9H5.5V11.2Z" fill="#f0901c" stroke="#8a2a08" stroke-width="1"/></svg>
<svg style="left:704px;top:63px" width="18" height="17" viewBox="0 0 18 17">
<path d="M3.5 11.5L7.5 1.5H10.5L14.5 11.5H11.5L10.8 9.5H7.2L6.5 11.5Z M7.9 7.3H10.1L9 4.2Z" fill="#7ea0c8" stroke="#1e3a5e" stroke-width="1.1" fill-rule="evenodd" stroke-linejoin="round"/>
<rect x="0.5" y="13" width="17" height="4" fill="#8a0808"/></svg>
<div class="a" style="left:727px;top:70px;width:0;height:0;border-left:3px solid transparent;border-right:3px solid transparent;border-top:3px solid #000"></div>
<svg style="left:738px;top:63px" width="18" height="17" viewBox="0 0 18 17">
<rect x="0.5" y="1" width="11" height="8" fill="#f8e020"/>
<text x="0.5" y="8.3" font-family="Liberation Sans" font-size="9" fill="#1a1a1a">ab</text>
<path d="M8 11.5L9 8.5L15 2.5L17 4.5L11 10.5Z" fill="#d8dce2" stroke="#5a6470" stroke-width="0.9"/>
<path d="M8 11.5L9 8.5L11 10.5Z" fill="#e07a20"/>
<rect x="0.5" y="13" width="17" height="4" fill="#fbf200"/></svg>
<div class="a" style="left:761px;top:70px;width:0;height:0;border-left:3px solid transparent;border-right:3px solid transparent;border-top:3px solid #000"></div>
<svg style="left:772px;top:63px" width="18" height="17" viewBox="0 0 18 17">
<path d="M11.5 3Q15.5 3 15.5 9" fill="none" stroke="#2a7ad8" stroke-width="1.8"/>
<path d="M1.5 5.5L6 1.5L12 7L8 11.5Z" fill="#c8ccd4" stroke="#3a3a3a" stroke-width="1"/>
<ellipse cx="6" cy="3" rx="3" ry="1.5" fill="#f0f0f0" stroke="#3a3a3a" stroke-width="0.8"/>
<rect x="1" y="13" width="16" height="3.5" fill="#fff" stroke="#000" stroke-width="1"/></svg>
<div class="a" style="left:795px;top:70px;width:0;height:0;border-left:3px solid transparent;border-right:3px solid transparent;border-top:3px solid #000"></div>
<div class="a" style="left:810px;top:59px;width:10px;height:28px;background:linear-gradient(#efefef,#d9d9d9)"><div class="a" style="left:2px;top:21px;width:0;height:0;border-left:3px solid transparent;border-right:3px solid transparent;border-top:3px solid #000"></div></div>
<div class="a" style="left:4px;top:733px;width:1px;height:1px;background:#8e8e8e;box-shadow:1px 0 0 #d0d0d0,0 1px 0 #e8e8e8"></div><div class="a" style="left:4px;top:737px;width:1px;height:1px;background:#8e8e8e;box-shadow:1px 0 0 #d0d0d0,0 1px 0 #e8e8e8"></div><div class="a" style="left:4px;top:741px;width:1px;height:1px;background:#8e8e8e;box-shadow:1px 0 0 #d0d0d0,0 1px 0 #e8e8e8"></div><div class="a" style="left:4px;top:745px;width:1px;height:1px;background:#8e8e8e;box-shadow:1px 0 0 #d0d0d0,0 1px 0 #e8e8e8"></div><div class="a" style="left:4px;top:749px;width:1px;height:1px;background:#8e8e8e;box-shadow:1px 0 0 #d0d0d0,0 1px 0 #e8e8e8"></div><div class="a" style="left:4px;top:753px;width:1px;height:1px;background:#8e8e8e;box-shadow:1px 0 0 #d0d0d0,0 1px 0 #e8e8e8"></div>
<svg style="left:18px;top:733px" width="10" height="16" viewBox="0 0 10 16"><path d="M0.8 0.8V12.2L3.5 9.8L5.8 14.8L8 13.8L5.8 9H9.5Z" fill="#fff" stroke="#000" stroke-width="1.1" stroke-linejoin="round"/></svg>
<svg style="left:46px;top:733px" width="16" height="16" viewBox="0 0 16 16"><path d="M1 14.5L14.5 1" stroke="#3a74d0" stroke-width="1.6"/></svg>
<svg style="left:68px;top:735px" width="18" height="12" viewBox="0 0 18 12"><defs><linearGradient id="bl" x1="0" y1="0" x2="0" y2="1"><stop offset="0" stop-color="#c8e4fc"/><stop offset="1" stop-color="#6aa4ec"/></linearGradient></defs>
<rect x="1" y="1" width="15.5" height="9.5" fill="url(#bl)" stroke="#2a50b8" stroke-width="1.3"/></svg>
<svg style="left:91px;top:735px" width="18" height="13" viewBox="0 0 18 13"><ellipse cx="8.7" cy="6" rx="8" ry="5.2" fill="url(#bl)" stroke="#2a50b8" stroke-width="1.2"/></svg>
<svg style="left:114px;top:732px" width="18" height="17" viewBox="0 0 18 17">
<path d="M0.5 9Q3 7 3.5 10Q4 13 8 12.5Q12 12 13.5 12.5Q15 13 16.5 12" fill="none" stroke="#3a74d0" stroke-width="1.3"/>
<path d="M4 12L5 8.5L12.5 1.5L15 4L7.5 11Z" fill="#f4d030" stroke="#5a4a10" stroke-width="0.9"/>
<path d="M11.5 2.5L14 0.5L16 2.5L14 5Z" fill="#f0a0a8" stroke="#a04050" stroke-width="0.8"/></svg>
<svg style="left:139px;top:733px" width="15" height="16" viewBox="0 0 15 16"><defs><linearGradient id="tg" x1="0" y1="0" x2="0" y2="1"><stop offset="0" stop-color="#7aa0c0"/><stop offset="1" stop-color="#2a5070"/></linearGradient></defs>
<path d="M0.5 0.5H13.5V5H12L11 3H8.5V13.5H10.5V15H3.5V13.5H5.5V3H3L2 5H0.5Z" fill="url(#tg)" stroke="#3a5a78" stroke-width="0.6"/></svg>
<svg style="left:160px;top:732px" width="18" height="17" viewBox="0 0 18 17">
<path d="M8.5 1C4 1 1 3.5 1 6.5C1 9.5 4 12 8 12L12.5 15.5L11.5 11.5C14.5 10.5 16 8.5 16 6.5C16 3.5 13 1 8.5 1Z" fill="#fafbfc" stroke="#7a848e" stroke-width="1.1"/>
<rect x="4.5" y="4.5" width="8" height="1.2" fill="#3a70c0"/><rect x="4.5" y="6.5" width="8" height="1.2" fill="#3a70c0"/><rect x="4.5" y="8.5" width="5" height="1.2" fill="#3a70c0"/></svg>
<svg style="left:191px;top:732px" width="17" height="17" viewBox="0 0 17 17"><path d="M8.3 1L15.8 8.3L8.3 15.6L0.8 8.3Z" fill="url(#bl)" stroke="#2a50b8" stroke-width="1.2" stroke-linejoin="round"/></svg>
<div class="a" style="left:214px;top:740px;width:0;height:0;border-left:3px solid transparent;border-right:3px solid transparent;border-top:3px solid #000"></div>
<svg style="left:225px;top:732px" width="17" height="17" viewBox="0 0 17 17"><circle cx="8.4" cy="8.5" r="7.5" fill="url(#bl)" stroke="#3a62b8" stroke-width="1"/>
<circle cx="5.7" cy="6.3" r="1" fill="#2a4a9a"/><circle cx="11.1" cy="6.3" r="1" fill="#2a4a9a"/>
<path d="M4.2 9.5Q8.4 13.5 12.6 9.5" fill="none" stroke="#2a4a9a" stroke-width="1.1"/></svg>
<div class="a" style="left:248px;top:740px;width:0;height:0;border-left:3px solid transparent;border-right:3px solid transparent;border-top:3px solid #000"></div>
<svg style="left:259px;top:736px" width="17" height="11" viewBox="0 0 17 11"><path d="M0.8 5L5 0.8V3H11V0.8L15.5 5L11 9.2V7H5V9.2Z" fill="url(#bl)" stroke="#2a50b8" stroke-width="1.1" stroke-linejoin="round"/></svg>
<div class="a" style="left:282px;top:740px;width:0;height:0;border-left:3px solid transparent;border-right:3px solid transparent;border-top:3px solid #000"></div>
<svg style="left:294px;top:733px" width="16" height="16" viewBox="0 0 16 16"><rect x="1" y="1" width="13.5" height="13.5" fill="url(#bl)" stroke="#2a50b8" stroke-width="1.3"/>
<path d="M1 4.5H14.5M4.5 4.5V14.5" stroke="#2a50b8" stroke-width="1"/></svg>
<div class="a" style="left:316px;top:740px;width:0;height:0;border-left:3px solid transparent;border-right:3px solid transparent;border-top:3px solid #000"></div>
<svg style="left:327px;top:732px" width="18" height="17" viewBox="0 0 18 17"><path d="M3 1.5H15Q16.5 1.5 16.5 3V9Q16.5 10.5 15 10.5H8L2 15.5L4.5 10.5H3Q1.5 10.5 1.5 9V3Q1.5 1.5 3 1.5Z" fill="url(#bl)" stroke="#2a50b8" stroke-width="1.1" stroke-linejoin="round"/></svg>
<div class="a" style="left:350px;top:740px;width:0;height:0;border-left:3px solid transparent;border-right:3px solid transparent;border-top:3px solid #000"></div>
<svg style="left:361px;top:732px" width="17" height="17" viewBox="0 0 17 17"><path d="M8.3 0.8L10.4 6H16L11.5 9.4L13.2 15.2L8.3 11.6L3.4 15.2L5.1 9.4L0.6 6H6.2Z" fill="url(#bl)" stroke="#2a50b8" stroke-width="1.1" stroke-linejoin="round"/></svg>
<div class="a" style="left:384px;top:740px;width:0;height:0;border-left:3px solid transparent;border-right:3px solid transparent;border-top:3px solid #000"></div>
<svg style="left:403px;top:733px" width="17" height="15" viewBox="0 0 17 15"><g fill="#fff" stroke="#c8c8c8" stroke-width="0.7">
<path d="M6 0.8L7.2 2L6 3.2L4.8 2Z"/><path d="M14 0.8L15.2 2L14 3.2L12.8 2Z"/><path d="M10 5.8L11.2 7L10 8.2L8.8 7Z"/>
<path d="M2 6.8L3.2 8L2 9.2L0.8 8Z"/><path d="M2 11.8L3.2 13L2 14.2L0.8 13Z"/><path d="M14 11.8L15.2 13L14 14.2L12.8 13Z"/></g></svg>
<svg style="left:434px;top:732px" width="18" height="17" viewBox="0 0 18 17"><path d="M6 4L9 1.5L12 4" fill="none" stroke="#7a7a7a" stroke-width="0.8"/>
<rect x="1" y="3.5" width="16" height="13" fill="#d89a28" stroke="#8a4a10"/>
<rect x="3" y="5.5" width="12" height="9" fill="#f2f4f6" stroke="#f0d070"/>
<text x="9" y="13.3" font-family="Liberation Sans" font-weight="bold" font-size="8" fill="#2a4a7a" text-anchor="middle">A</text></svg>
<svg style="left:457px;top:732px" width="18" height="17" viewBox="0 0 18 17"><circle cx="11.5" cy="6.2" r="5.5" fill="#f8c830" stroke="#b07010" stroke-width="0.9"/>
<rect x="0.8" y="5" width="8.5" height="8.5" fill="#f06a10" stroke="#9a2a08" stroke-width="1"/>
<path d="M10.5 6.5L16 16H5Z" fill="#7ea0c8" stroke="#1e3a5e" stroke-width="1.1" stroke-linejoin="round"/></svg>
<svg style="left:488px;top:732px" width="18" height="17" viewBox="0 0 18 17"><g fill="#ececec" stroke="#c4c4c4" stroke-width="0.9">
<rect x="1" y="1" width="4" height="6"/><path d="M1 7H8V11H5L1 8Z"/>
<path d="M9 8L12 5.5H17V12L14 14.5H9Z"/><path d="M9 8H14V14.5M14 8L17 5.5"/></g></svg>
<div class="a" style="left:515px;top:728px;width:10px;height:28px;background:linear-gradient(#efefef,#d9d9d9)"><div class="a" style="left:2px;top:21px;width:0;height:0;border-left:3px solid transparent;border-right:3px solid transparent;border-top:3px solid #000"></div></div>
<div class="a" style="left:955px;top:622px;width:13px;height:11px;border-radius:0 0 7px 7px;background:#cfcfcf"></div>
<div class="a" style="left:954px;top:92px;width:16px;height:8px;background:linear-gradient(90deg,#e6e6e6,#fafafa 40%,#f0f0f0)"></div>
<div class="a" style="left:954px;top:92px;width:1px;height:632px;background:#c6c6c0"></div>
<div class="a" style="left:955px;top:98px;width:13px;height:531px;border-radius:6.5px;
background:linear-gradient(90deg,#2a48c8 0,#2a48c8 1px,#a8c8f0 1px,#a8c8f0 5px,#6aa0ec 5px,#90c4f8 8px,#b8e8ff 11px,#a0d0f8 12px,#505050 12px);
box-shadow:0 2px 2px rgba(0,0,0,.25), inset 0 2px 1px -1px #2040c0, inset 0 -3px 2px -1px #2a40c0"></div>
<div class="a" style="left:956px;top:104px;width:11px;height:518px;background:repeating-linear-gradient(rgba(255,255,255,.06) 0 3px,rgba(0,40,120,.04) 3px 6px)"></div>
<div class="a" style="left:954px;top:633px;width:16px;height:30px;background:linear-gradient(90deg,#f4f4f4,#fcfcfc 50%,#ececec)"></div>
<div class="a" style="left:954px;top:648px;width:16px;height:1px;background:#d8d8d8"></div>
<div class="a" style="left:958px;top:637px;width:0;height:0;border-left:4px solid transparent;border-right:4px solid transparent;border-bottom:6px solid #5a5a5a"></div>
<div class="a" style="left:958px;top:654px;width:0;height:0;border-left:4px solid transparent;border-right:4px solid transparent;border-top:6px solid #5a5a5a"></div>
<svg style="left:954.5px;top:663px" width="14" height="14" viewBox="0 0 14 14"><circle cx="7" cy="7" r="6.3" fill="#fff" stroke="#2a2a2a" stroke-width="1"/><path d="M4 6.5L7 3.5L10 6.5ZM4 10L7 7L10 10Z" fill="#000"/></svg>
<svg style="left:954.5px;top:678px" width="14" height="14" viewBox="0 0 14 14"><circle cx="7" cy="7" r="6.3" fill="#fff" stroke="#2a2a2a" stroke-width="1"/><path d="M4.5 9.5Q4.5 5 8.5 4.5Q10 4.5 10 5.5V9.5Z" fill="#4a7ab0" stroke="#2a4a70" stroke-width="0.6"/></svg>
<svg style="left:954.5px;top:693px" width="14" height="14" viewBox="0 0 14 14"><circle cx="7" cy="7" r="6.3" fill="#fff" stroke="#2a2a2a" stroke-width="1"/><path d="M4 3.5L7 6.5L10 3.5ZM4 7L7 10L10 7Z" fill="#000"/></svg>
<svg style="left:721px;top:764px" width="11" height="11" viewBox="0 0 11 11"><path d="M0.5 0.5H7L10.5 4V10.5H0.5Z" fill="#d8e4f4" stroke="#2a5aa0"/><path d="M7 0.5V4H10.5" fill="#fff" stroke="#2a5aa0" stroke-width="0.8"/></svg>
<svg style="left:737px;top:764px" width="20" height="11" viewBox="0 0 20 11"><g fill="#f0f2f5" stroke="#7a8494"><path d="M0.5 0.5H6L8.5 3V10.5H0.5Z"/><path d="M10.5 0.5H16L18.5 3V10.5H10.5Z"/></g></svg>
<svg style="left:761px;top:764px" width="19" height="11" viewBox="0 0 19 11"><g fill="#f0f2f5" stroke="#7a8494"><path d="M0.5 10.5V3L3 0.5H8.5V10.5Z"/><path d="M9.5 0.5H15L17.5 3V10.5H9.5Z"/></g></svg>
<svg style="left:795px;top:764px" width="13" height="13" viewBox="0 0 13 13"><circle cx="6.4" cy="6.4" r="5.5" fill="#dce6f0" stroke="#2a3440" stroke-width="1.1"/><rect x="3.5" y="5.8" width="6" height="1.4" fill="#2a5aa0"/></svg>
<div class="a" style="left:812px;top:769px;width:97px;height:2px;background:#9a9a9a;border-bottom:1px solid #f8f8f8"></div>
<div class="a" style="left:860px;top:765px;width:1px;height:11px;background:#8a8a8a"></div>
<div class="a" style="left:828px;top:765px;width:1px;height:3px;background:#8a8a8a"></div>
<svg style="left:823px;top:765px" width="11" height="11" viewBox="0 0 11 11"><circle cx="5.3" cy="5.5" r="4.2" fill="#7a9ec0" stroke="#3a4a5a" stroke-width="1"/><circle cx="4.5" cy="4.5" r="1.8" fill="#a8c4e0"/></svg>
<svg style="left:913px;top:764px" width="13" height="13" viewBox="0 0 13 13"><circle cx="6.4" cy="6.4" r="5.5" fill="#dce6f0" stroke="#2a3440" stroke-width="1.1"/><rect x="3.5" y="5.8" width="6" height="1.4" fill="#2a5aa0"/><rect x="5.7" y="3.5" width="1.4" height="6" fill="#2a5aa0"/></svg>
<svg style="left:955px;top:766px" width="15" height="14" viewBox="0 0 15 14"><path d="M14 3L3 14M14 7L7 14M14 11L11 14" stroke="#9a9a9a" stroke-width="1"/><path d="M14 4L4 14M14 8L8 14M14 12L12 14" stroke="#fff" stroke-width="0.8"/></svg>
</body></html>
